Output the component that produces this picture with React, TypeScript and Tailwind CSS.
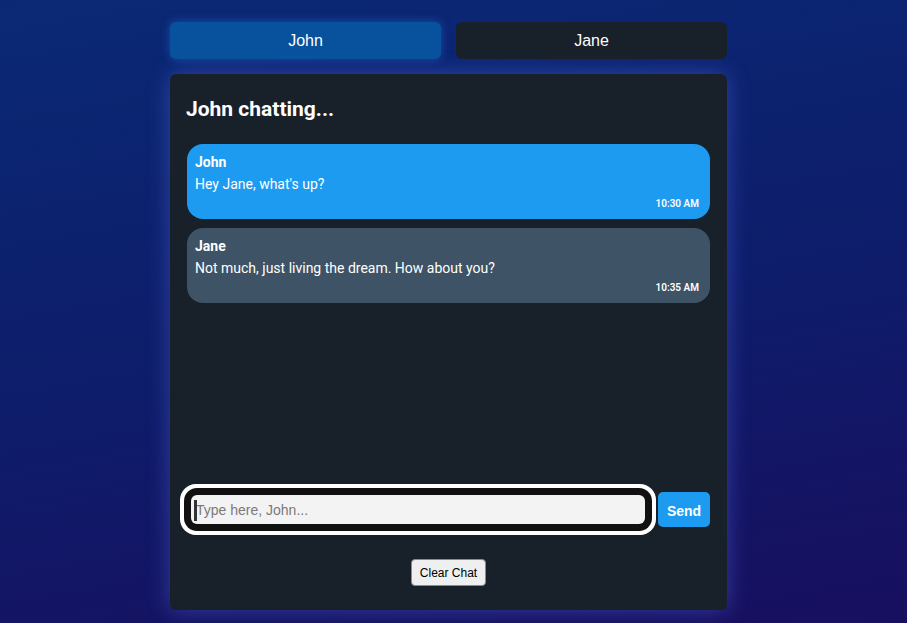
import { useState } from 'react'

type Message = { id: number; sender: string; text: string; time: string }

const initialMessages: Message[] = [
  { id: 1, sender: 'John', text: "Hey Jane, what's up?", time: '10:30 AM' },
  { id: 2, sender: 'Jane', text: 'Not much, just living the dream. How about you?', time: '10:35 AM' },
]

const arial = 'font-["Liberation_Sans",Arial,sans-serif]'

export default function App() {
  const [user, setUser] = useState<'John' | 'Jane'>('John')
  const [messages, setMessages] = useState<Message[]>(initialMessages)
  const [draft, setDraft] = useState('')

  const send = () => {
    if (!draft.trim()) return
    setMessages((m) => [...m, { id: Date.now(), sender: user, text: draft, time: '10:40 AM' }])
    setDraft('')
  }

  return (
    <div className="min-h-[623px] w-full bg-[linear-gradient(170deg,#0a2975_0%,#0e1c6a_55%,#180f5f_100%)] pt-[22px] pb-[13px]">
      <div className="ml-[170px] w-[557px]">
        <div className="flex gap-[15px]">
          {(['John', 'Jane'] as const).map((name) => (
            <button
              key={name}
              onClick={() => setUser(name)}
              className={`${arial} flex h-[37px] flex-1 items-center justify-center rounded-md text-base text-white ${
                user === name
                  ? 'bg-[#07519d] shadow-[0_0_10px_rgba(40,110,220,0.55)]'
                  : 'bg-[#18202a]'
              }`}
            >
              {name}
            </button>
          ))}
        </div>

        <div className='mt-[15px] flex h-[536px] flex-col rounded-md bg-[#18202a] px-[17px] pt-[21px] pb-[24px] font-["Roboto",sans-serif] text-white shadow-[0_0_22px_rgba(90,110,230,0.45)]'>
          <h2 className="-ml-px text-[21px] leading-7 font-bold">{user} chatting...</h2>

          <div className="mt-[21px] flex flex-1 flex-col gap-[9px] overflow-hidden">
            {messages.map((m) => (
              <div
                key={m.id}
                className={`flex flex-col rounded-2xl pt-2 pr-[11px] pb-[7px] pl-2 ${
                  m.sender === 'John' ? 'bg-[#1d9bf0]' : 'bg-[#3e5365]'
                }`}
              >
                <span className="text-sm leading-5 font-bold">{m.sender}</span>
                <span className="mt-[2px] text-sm leading-5">{m.text}</span>
                <span className="mt-[2px] self-end text-[10px] leading-4 font-semibold">{m.time}</span>
              </div>
            ))}
          </div>

          <div className="flex h-[35px] items-center gap-[13px]">
            <div className="relative ml-[4px] flex-1">
              <input
                value={draft}
                onChange={(e) => setDraft(e.target.value)}
                placeholder={`Type here, ${user}...`}
                className={`${arial} h-[29px] w-full rounded-md bg-[#f3f3f3] pl-[5px] text-sm text-black outline-none placeholder:text-[#7a7a7a] shadow-[0_0_0_7px_#111111,0_0_0_11px_#ffffff]`}
              />
              <span className="pointer-events-none absolute top-[5px] left-[3px] h-[21px] w-[3px] bg-[#333]" />
            </div>
            <button
              onClick={send}
              className={`${arial} h-[35px] w-[52px] rounded-[5px] bg-[#1d9bf0] pt-[3px] text-sm font-bold text-white`}
            >
              Send
            </button>
          </div>

          <div className="mt-[32px] flex justify-center">
            <button
              onClick={() => setMessages([])}
              className={`${arial} h-[27px] rounded-[4px] border border-[#8a8a8a] bg-[#efefef] px-[8px] text-[12px] text-black`}
            >
              Clear Chat
            </button>
          </div>
        </div>
      </div>
    </div>
  )
}
